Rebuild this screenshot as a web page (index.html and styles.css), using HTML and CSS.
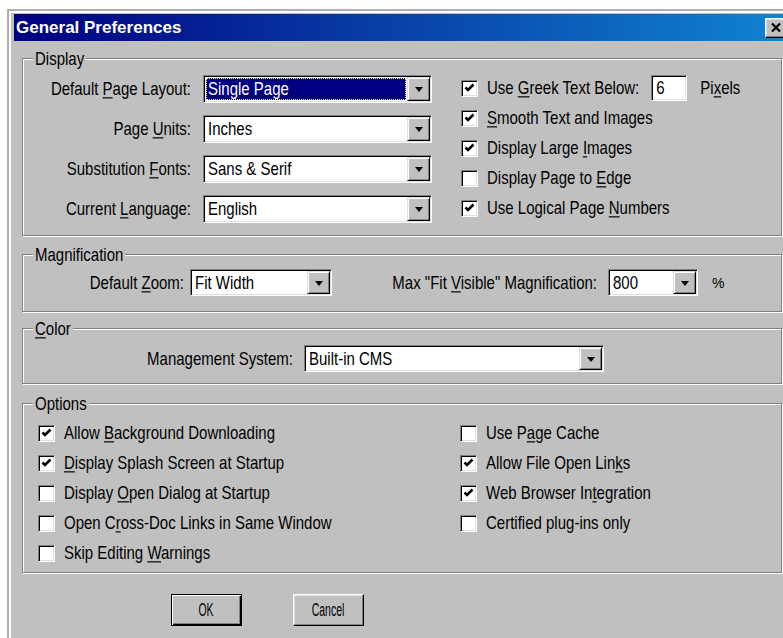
FILE: index.html
```html
<!DOCTYPE html>
<html lang="en">
<head>
<meta charset="utf-8">
<title>General Preferences</title>
<link rel="stylesheet" href="styles.css">
</head>
<body>
<div class="window">
  <div class="titlebar">
    <span class="title">General Preferences</span>
    <span class="close"><svg viewBox="0 0 20 18" width="20" height="18"><path d="M6 4.5l8 8M14 4.5l-8 8"/></svg></span>
  </div>

  <div class="content">
    <section class="group display">
      <span class="legend"><span class="tx">Display</span></span>
      <div class="fields">
        <span class="lbl"><span class="tx">Default <u>P</u>age Layout:</span></span>
        <div class="combo"><span class="field sel"><span class="tx">Single Page</span></span><span class="drop"></span></div>
        <span class="lbl"><span class="tx">Page <u>U</u>nits:</span></span>
        <div class="combo"><span class="field"><span class="tx">Inches</span></span><span class="drop"></span></div>
        <span class="lbl"><span class="tx">Substitution <u>F</u>onts:</span></span>
        <div class="combo"><span class="field"><span class="tx">Sans &amp; Serif</span></span><span class="drop"></span></div>
        <span class="lbl"><span class="tx">Current <u>L</u>anguage:</span></span>
        <div class="combo"><span class="field"><span class="tx">English</span></span><span class="drop"></span></div>
      </div>
      <div class="checks">
        <div class="crow">
          <span class="cb"><svg class="tick" viewBox="0 0 15 15"><path d="M3.5 6.5L6 9l5.5-5.5"/></svg></span>
          <span class="tx">Use <u>G</u>reek Text Below:</span>
          <span class="edit"><span class="tx">6</span></span>
          <span class="tx unit">Pi<u>x</u>els</span>
        </div>
        <div class="crow">
          <span class="cb"><svg class="tick" viewBox="0 0 15 15"><path d="M3.5 6.5L6 9l5.5-5.5"/></svg></span>
          <span class="tx"><u>S</u>mooth Text and Images</span>
        </div>
        <div class="crow">
          <span class="cb"><svg class="tick" viewBox="0 0 15 15"><path d="M3.5 6.5L6 9l5.5-5.5"/></svg></span>
          <span class="tx">Display Large <u>I</u>mages</span>
        </div>
        <div class="crow">
          <span class="cb"></span>
          <span class="tx">Display Page to <u>E</u>dge</span>
        </div>
        <div class="crow">
          <span class="cb"><svg class="tick" viewBox="0 0 15 15"><path d="M3.5 6.5L6 9l5.5-5.5"/></svg></span>
          <span class="tx">Use Logical Page <u>N</u>umbers</span>
        </div>
      </div>
    </section>

    <section class="group line mag">
      <span class="legend"><span class="tx">Magnification</span></span>
      <span class="lbl zoom-lbl"><span class="tx">Default <u>Z</u>oom:</span></span>
      <div class="combo short zoom-combo"><span class="field"><span class="tx">Fit Width</span></span><span class="drop"></span></div>
      <span class="lbl max-lbl"><span class="tx">Max "Fit <u>V</u>isible" Magnification:</span></span>
      <div class="combo short max-combo"><span class="field"><span class="tx">800</span></span><span class="drop"></span></div>
      <span class="pct">%</span>
    </section>

    <section class="group line color">
      <span class="legend"><span class="tx"><u>C</u>olor</span></span>
      <span class="lbl cms-lbl"><span class="tx">Management System:</span></span>
      <div class="combo short cms-combo"><span class="field"><span class="tx">Built-in CMS</span></span><span class="drop"></span></div>
    </section>

    <section class="group options">
      <span class="legend"><span class="tx">Options</span></span>
      <div class="col">
        <div class="crow">
          <span class="cb"><svg class="tick" viewBox="0 0 15 15"><path d="M3.5 6.5L6 9l5.5-5.5"/></svg></span>
          <span class="tx">Allow <u>B</u>ackground Downloading</span>
        </div>
        <div class="crow">
          <span class="cb"><svg class="tick" viewBox="0 0 15 15"><path d="M3.5 6.5L6 9l5.5-5.5"/></svg></span>
          <span class="tx"><u>D</u>isplay Splash Screen at Startup</span>
        </div>
        <div class="crow">
          <span class="cb"></span>
          <span class="tx">Display <u>O</u>pen Dialog at Startup</span>
        </div>
        <div class="crow">
          <span class="cb"></span>
          <span class="tx">Open C<u>r</u>oss-Doc Links in Same Window</span>
        </div>
        <div class="crow">
          <span class="cb"></span>
          <span class="tx">Skip Editing <u>W</u>arnings</span>
        </div>
      </div>
      <div class="col">
        <div class="crow">
          <span class="cb"></span>
          <span class="tx">Use P<u>a</u>ge Cache</span>
        </div>
        <div class="crow">
          <span class="cb"><svg class="tick" viewBox="0 0 15 15"><path d="M3.5 6.5L6 9l5.5-5.5"/></svg></span>
          <span class="tx">Allow File Open Lin<u>k</u>s</span>
        </div>
        <div class="crow">
          <span class="cb"><svg class="tick" viewBox="0 0 15 15"><path d="M3.5 6.5L6 9l5.5-5.5"/></svg></span>
          <span class="tx">Web Browser In<u>t</u>egration</span>
        </div>
        <div class="crow">
          <span class="cb"></span>
          <span class="tx">Certified plug-ins only</span>
        </div>
      </div>
    </section>

    <div class="buttons">
      <button class="btn default" type="button"><span>OK</span></button>
      <button class="btn" type="button"><span>Cancel</span></button>
    </div>
  </div>
</div>
</body>
</html>
```

FILE: styles.css
```css
html, body {
  margin: 0;
  height: 100%;
  overflow: hidden;
  background: #fff;
}

body {
  font-family: "Liberation Sans", Arial, sans-serif;
  font-size: 15px;
  line-height: 20px;
  color: #000;
}

u {
  text-decoration-thickness: 1px;
  text-underline-offset: 2px;
}

/* dialog text is drawn slightly tall and narrow */
.tx {
  display: inline-block;
  white-space: nowrap;
  transform: scaleY(1.18);
}

/* window frame; its lower edge continues past the bottom of the screen */
.window {
  margin: 9px 0 0 7px;
  width: 776px;
  height: 624px;
  border: 2px solid #b0b0b0;
  border-bottom: 0;
  padding: 3px 3px 0 5px;
  background: #c0c0c0;
  box-shadow: inset 2px 2px #fff;
  overflow: hidden;
}

.titlebar {
  height: 27px;
  display: flex;
  align-items: center;
  justify-content: space-between;
  padding: 0 3px 0 2px;
  background: linear-gradient(to right, #000080, #1084d0);
}

.title {
  color: #fff;
  font: bold 17px/20px "Liberation Sans", Arial, sans-serif;
}

.close {
  width: 22px;
  height: 20px;
  box-sizing: border-box;
  display: flex;
  align-items: center;
  justify-content: center;
  background: #c0c0c0;
  border: 1px solid;
  border-color: #fff #000 #000 #fff;
  box-shadow: inset -1px -1px #808080, inset 1px 1px #dfdfdf;
}

.close path {
  fill: none;
  stroke: #000;
  stroke-width: 2.2;
}

.content {
  padding: 17px 8px 0;
}

/* etched group boxes */
.group {
  position: relative;
  border: 1px solid #808080;
  box-shadow: 1px 1px #fff, inset 1px 1px #fff;
}

.legend {
  position: absolute;
  top: -10px;
  left: 10px;
  padding: 0 2px;
  background: #c0c0c0;
  white-space: nowrap;
}

.lbl {
  white-space: nowrap;
  text-align: right;
}

/* Display */
.display {
  display: flex;
  align-items: flex-start;
  padding: 16px 0 12px 27px;
}

.fields {
  display: grid;
  grid-template-columns: 141px 229px;
  column-gap: 12px;
  row-gap: 12px;
  align-items: center;
}

.checks {
  margin: -2px 0 0 29px;
  display: flex;
  flex-direction: column;
}

.crow {
  height: 30px;
  display: flex;
  align-items: center;
  white-space: nowrap;
}

/* combo box */
.combo {
  height: 28px;
  box-sizing: border-box;
  display: flex;
  padding: 1px;
  background: #fff;
  border: 1px solid;
  border-color: #808080 #fff #fff #808080;
  box-shadow: inset 1px 1px #000, inset -1px -1px #dfdfdf;
}

.combo.short {
  height: 27px;
}

.field {
  flex: 1;
  margin: 1px;
  padding-left: 2px;
  display: flex;
  align-items: center;
  white-space: nowrap;
  overflow: hidden;
}

.field.sel {
  background: #000080;
  color: #fff;
  outline: 1px dotted #f0f080;
  outline-offset: -1px;
}

.drop {
  width: 23px;
  box-sizing: border-box;
  display: flex;
  align-items: center;
  justify-content: center;
  background: #c0c0c0;
  border: 1px solid;
  border-color: #dfdfdf #000 #000 #dfdfdf;
  box-shadow: inset 1px 1px #fff, inset -1px -1px #808080;
}

.drop::after {
  content: "";
  border-top: 5px solid #000;
  border-left: 4px solid transparent;
  border-right: 4px solid transparent;
  margin-top: 1px;
}

/* check boxes */
.cb {
  width: 17px;
  height: 17px;
  flex: none;
  box-sizing: border-box;
  margin-right: 9px;
  background: #fff;
  border: 1px solid;
  border-color: #808080 #fff #fff #808080;
  box-shadow: inset 1px 1px #000, inset -1px -1px #dfdfdf;
  display: flex;
}

.tick {
  width: 15px;
  height: 15px;
}

.tick path {
  fill: none;
  stroke: #000;
  stroke-width: 2.6;
}

.edit {
  width: 36px;
  height: 26px;
  box-sizing: border-box;
  margin-left: 12px;
  padding: 2px 0 0 4px;
  background: #fff;
  border: 1px solid;
  border-color: #808080 #fff #fff #808080;
  box-shadow: inset 1px 1px #000, inset -1px -1px #dfdfdf;
}

.unit {
  margin-left: 13px;
}

/* Magnification */
.line {
  display: flex;
  align-items: center;
}

.mag {
  padding: 14px 0 15px 27px;
  margin-top: 18px;
}

.zoom-lbl {
  width: 134px;
}

.zoom-combo {
  width: 142px;
  margin-left: 6px;
}

.max-lbl {
  width: 205px;
  margin-left: 60px;
}

.max-combo {
  width: 90px;
  margin-left: 11px;
}

.pct {
  margin-left: 14px;
  font-size: 14px;
}

/* Color */
.color {
  padding: 16px 0 11px 27px;
  margin-top: 16px;
}

.cms-lbl {
  width: 243px;
}

.cms-combo {
  width: 300px;
  margin-left: 11px;
}

/* Options */
.options {
  display: grid;
  grid-template-columns: 422px 1fr;
  align-items: start;
  padding: 14px 0 4px 15px;
  margin-top: 19px;
}

.col {
  display: flex;
  flex-direction: column;
}

/* push buttons */
.buttons {
  display: flex;
  gap: 51px;
  padding: 21px 0 0 149px;
}

.btn {
  width: 71px;
  height: 32px;
  margin: 0;
  padding: 0;
  box-sizing: border-box;
  font: 18px/20px "Liberation Sans", Arial, sans-serif;
  color: #000;
  background: #c0c0c0;
  border: 1px solid;
  border-color: #fff #000 #000 #fff;
  box-shadow: inset -1px -1px #808080, inset 1px 1px #dfdfdf;
}

.btn.default {
  border-color: #000;
  box-shadow: inset 1px 1px #fff, inset -1px -1px #000, inset -2px -2px #808080;
}

.btn span {
  display: inline-block;
  transform: scaleX(0.58);
}
```
